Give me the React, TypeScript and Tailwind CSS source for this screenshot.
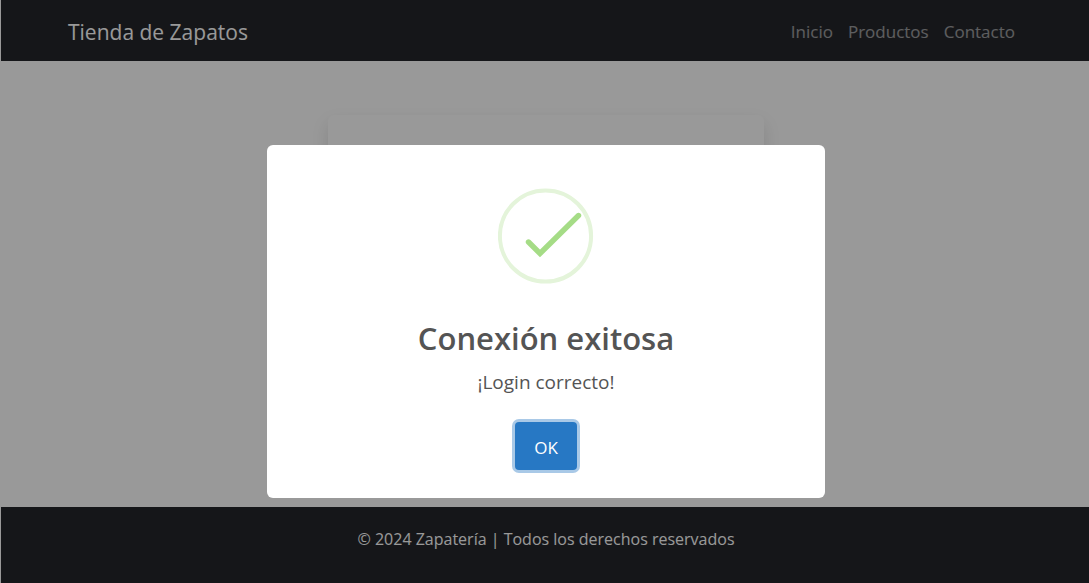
import React from "react";

const links = ["Inicio", "Productos", "Contacto"];

function SuccessIcon() {
  return (
    <svg viewBox="0 0 96 96" className="size-24" fill="none" aria-hidden="true">
      <circle cx="47.5" cy="48" r="45.6" stroke="#e4f4da" strokeWidth="4" />
      <path
        d="M30.5 54 L42 65.5 L80.5 27.5"
        stroke="#a5dc86"
        strokeWidth="5.4"
        strokeLinecap="round"
        strokeLinejoin="miter"
      />
    </svg>
  );
}

function SuccessDialog() {
  return (
    <div className="fixed inset-0 flex items-center justify-center bg-black/40 pt-15 pl-[3px]">
      <div
        role="dialog"
        aria-modal="true"
        aria-labelledby="dialog-title"
        aria-describedby="dialog-text"
        className="flex w-[558px] max-w-full flex-col items-center rounded-md bg-white px-6 pt-[43px] pb-7 text-[#545454]"
      >
        <SuccessIcon />
        <h2 id="dialog-title" className="mt-8 text-[31px] leading-11 font-semibold">
          Conexión exitosa
        </h2>
        <p id="dialog-text" className="mt-2 text-[19px] leading-7">
          ¡Login correcto!
        </p>
        <button
          type="button"
          className="mt-[26px] h-12 rounded-sm bg-[#2778c4] px-[19px] pt-1 text-[17px] text-white ring-3 ring-[#a9c9e7] outline-none"
        >
          OK
        </button>
      </div>
    </div>
  );
}

export default function App() {
  return (
    <div className="flex min-h-screen flex-col border-l border-white bg-white font-['Open_Sans','Noto_Sans',sans-serif]">
      <header className="bg-[#24262b] px-[67px]">
        <nav className="flex h-[61px] items-center justify-between pt-1">
          <a href="#" className="text-[21px] text-white">
            Tienda de Zapatos
          </a>
          <ul className="flex gap-[15px] pr-[7px] pb-0.5 text-[17px] leading-6 text-white/55">
            {links.map((label) => (
              <li key={label}>
                <a href="#">{label}</a>
              </li>
            ))}
          </ul>
        </nav>
      </header>
      <main className="flex flex-1 justify-center pt-[54px] pl-px">
        <div className="h-80 w-[436px] rounded-md bg-white shadow-[0_8px_17px_rgba(0,0,0,0.12)]" />
      </main>
      <footer className="flex h-19 justify-center bg-[#24262b] pt-5 pl-0.5 text-base text-white">
        <p>© 2024 Zapatería | Todos los derechos reservados</p>
      </footer>
      <SuccessDialog />
    </div>
  );
}
